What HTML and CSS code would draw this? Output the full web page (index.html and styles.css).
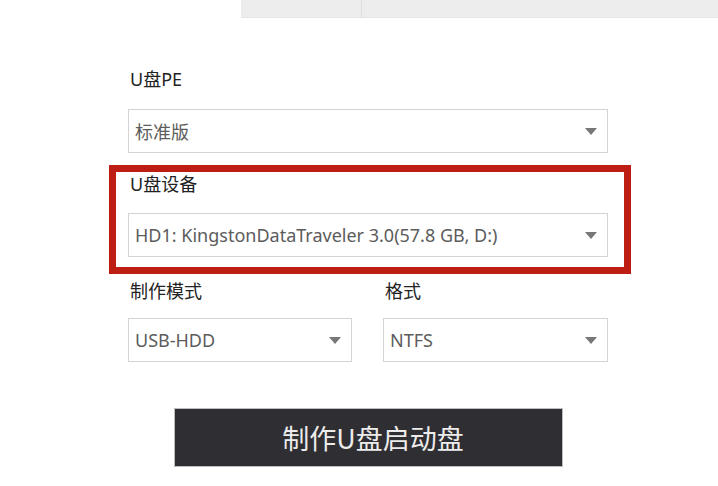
FILE: index.html
```html
<!DOCTYPE html>
<html lang="zh-CN">
<head>
  <meta charset="UTF-8">
  <meta name="viewport" content="width=device-width, initial-scale=1.0">
  <title>U盘启动</title>
  <link rel="stylesheet" href="styles.css">
</head>
<body>
  <div class="tabs">
    <span class="tab active"><em>U盘启动</em></span>
    <span class="tab"><em>ISO模式</em></span>
    <span class="tab wide"><em>本地模式</em></span>
  </div>

  <div class="form">
    <div class="field">
      <label>U盘PE</label>
      <div class="select">标准版<i class="arrow"></i></div>
    </div>

    <div class="field mark">
      <label>U盘设备</label>
      <div class="select">HD1: KingstonDataTraveler 3.0(57.8 GB, D:)<i class="arrow"></i></div>
    </div>

    <div class="row">
      <div class="field">
        <label>制作模式</label>
        <div class="select">USB-HDD<i class="arrow"></i></div>
      </div>
      <div class="field">
        <label>格式</label>
        <div class="select">NTFS<i class="arrow"></i></div>
      </div>
    </div>

    <button class="make">制作U盘启动盘</button>
  </div>
</body>
</html>
```

FILE: styles.css
```css
*{
  margin:0;
  padding:0;
  box-sizing:border-box;
}

body{
  width:718px;
  height:486px;
  overflow:hidden;
  background:#fff;
  font-family:"Noto Sans","Noto Sans CJK SC",sans-serif;
  color:#222;
}

/* 상단 탭 (위쪽은 잘려 있음) */
.tabs{
  display:flex;
  height:18px;
  overflow:hidden;
}
.tab{
  display:flex;
  justify-content:flex-start;
  width:120px;
  padding-left:27px;
  background:#ededed;
  border-bottom:1px solid #e6e6e6;
}
.tab.active{
  width:241px;
  background:#fff;
  border:none;
  padding-left:67px;
}
.tab.wide{
  flex:1;
  padding-left:84px;
  border-left:1px solid #e0e0e0;
}
.tab em{
  font-style:normal;
  font-size:16px;
  line-height:20px;
  margin-top:-18px;
  color:#777;
}

.form{
  width:480px;
  margin:50px 0 0 128px;
  display:flex;
  flex-direction:column;
}

.field{
  display:flex;
  flex-direction:column;
  gap:19px;
}
.field label{
  padding-left:2px;
  font-size:18px;
  line-height:22px;
  color:#222;
}

.select{
  display:flex;
  align-items:center;
  justify-content:space-between;
  height:44px;
  padding:0 10px 0 6px;
  border:1px solid #d4d4d4;
  background:#fff;
  font-size:18px;
  color:#5c5c5c;
}
.arrow{
  width:0;
  height:0;
  border-top:7px solid #777;
  border-left:6px solid transparent;
  border-right:6px solid transparent;
}

/* 빨간 강조 박스 */
.field.mark{
  margin:12px -23px 0 -19px;
  padding:1px 16px 10px 12px;
  border:7px solid #bd1d12;
  gap:18px;
}

.row{
  display:grid;
  grid-template-columns:224px 225px;
  column-gap:31px;
  margin-top:6px;
}
.row .field{gap:16px;}

.make{
  align-self:center;
  width:389px;
  height:59px;
  margin-top:46px;
  padding-left:10px;
  background:#2f2e32;
  border:1px solid #bdbdbd;
  color:#ececec;
  font-family:"Noto Sans CJK SC",sans-serif;
  font-size:27px;
  cursor:pointer;
}
```
